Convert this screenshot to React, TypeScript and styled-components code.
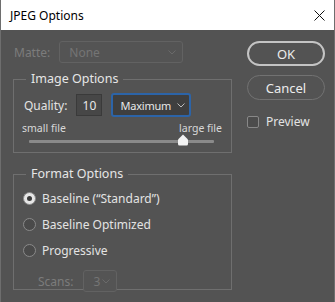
import React from "react";
import styled, { createGlobalStyle } from "styled-components";

const Global = createGlobalStyle`
  html, body { margin: 0; padding: 0; background: #535353; }
  body { font-family: "Noto Sans", "Open Sans", sans-serif; }
  * { box-sizing: border-box; }
`;

const Window = styled.div`
  width: 335px;
  height: 302px;
  display: flex;
  flex-direction: column;
  background: #535353;
  border-left: 1px solid #6e6e6e;
  border-right: 1px solid #6e6e6e;
  overflow: hidden;
`;

const TitleBar = styled.div`
  height: 30px;
  flex: none;
  background: #ffffff;
  display: flex;
  align-items: center;
  justify-content: space-between;
  padding: 0 9px 0 9px;
  color: #000;
  font-size: 12px;
`;

const CloseIcon = styled.svg`
  width: 11px;
  height: 11px;
`;

const Body = styled.div`
  flex: 1;
  display: flex;
  gap: 15px;
  padding: 11px 0 0 12px;
`;

const LeftCol = styled.div`
  width: 219px;
  display: flex;
  flex-direction: column;
`;

const RightCol = styled.div`
  width: 78px;
  display: flex;
  flex-direction: column;
  gap: 9px;
`;

const Row = styled.div<{ $gap?: number; $pl?: number; $mt?: number }>`
  display: flex;
  align-items: center;
  gap: ${(p) => p.$gap ?? 8}px;
  padding-left: ${(p) => p.$pl ?? 0}px;
  margin-top: ${(p) => p.$mt ?? 0}px;
`;

const Label = styled.span<{ $disabled?: boolean }>`
  font-size: 12px;
  color: ${(p) => (p.$disabled ? "#7c7c7c" : "#e3e3e3")};
  white-space: nowrap;
`;

const SelectBox = styled.div<{ $w: number; $h: number; $active?: boolean; $disabled?: boolean }>`
  width: ${(p) => p.$w}px;
  height: ${(p) => p.$h}px;
  flex: none;
  display: flex;
  align-items: center;
  justify-content: space-between;
  padding: 0 ${(p) => (p.$active ? 4 : 6)}px 0 ${(p) => (p.$active ? 7 : 9)}px;
  border-radius: 3px;
  font-size: ${(p) => (p.$active ? 11 : 12)}px;
  letter-spacing: ${(p) => (p.$active ? -0.2 : 0)}px;
  color: ${(p) => (p.$disabled ? "#757575" : "#e8e8e8")};
  background: ${(p) => (p.$active ? "#3f3f3f" : "#545454")};
  border: ${(p) => (p.$active ? "2px solid #2c64a8" : "1px solid #626262")};
`;

const Chevron = ({ color }: { color: string }) => (
  <svg width="8" height="5" viewBox="0 0 8 5" style={{ flex: "none" }}>
    <path d="M0.5 0.5 L4 4 L7.5 0.5" fill="none" stroke={color} strokeWidth="1" />
  </svg>
);

const Group = styled.fieldset<{ $h: number; $mt: number }>`
  margin: ${(p) => p.$mt}px 0 0 0;
  height: ${(p) => p.$h}px;
  border: 1px solid #6f6f6f;
  padding: 0;
  min-width: 0;
`;

const Legend = styled.legend`
  margin-left: 12px;
  padding: 0 5px;
  font-size: 12.5px;
  color: #e6e6e6;
  line-height: 14px;
`;

const NumInput = styled.div`
  width: 26px;
  height: 22px;
  flex: none;
  display: flex;
  align-items: center;
  justify-content: center;
  background: #474747;
  border: 1px solid #3a3a3a;
  font-size: 12px;
  color: #e8e8e8;
`;

const SliderArea = styled.div`
  display: flex;
  flex-direction: column;
  padding: 5px 0 0 8px;
  width: 208px;
`;

const SliderLabels = styled.div`
  display: flex;
  justify-content: space-between;
  font-size: 10.5px;
  color: #d8d8d8;
  line-height: 13px;
`;

const Track = styled.div`
  position: relative;
  margin: 5px 0 0 7px;
  width: 185px;
  height: 3px;
  background: #8a8a8a;
  border-radius: 1px;
`;

const Thumb = styled.svg`
  position: absolute;
  left: 148px;
  top: -6px;
`;

const RadioList = styled.div`
  display: flex;
  flex-direction: column;
  gap: 9px;
  padding: 9px 0 0 9px;
`;

const RadioRow = styled.div`
  display: flex;
  align-items: center;
  gap: 6px;
  height: 17px;
`;

const RadioCircle = styled.div<{ $checked?: boolean }>`
  width: 13px;
  height: 13px;
  border-radius: 50%;
  border: 1px solid #8a8a8a;
  background: ${(p) => (p.$checked ? "#e6e6e6" : "#4a4a4a")};
  display: flex;
  align-items: center;
  justify-content: center;
  &::after {
    content: "";
    display: ${(p) => (p.$checked ? "block" : "none")};
    width: 5px;
    height: 5px;
    border-radius: 50%;
    background: #3a3a3a;
  }
`;

const Button = styled.div<{ $primary?: boolean }>`
  height: 25px;
  border-radius: 13px;
  border: ${(p) => (p.$primary ? "2px solid #c4c4c4" : "1px solid #727272")};
  display: flex;
  align-items: center;
  justify-content: center;
  font-size: 13px;
  color: #ececec;
`;

const CheckRow = styled.div`
  display: flex;
  align-items: center;
  gap: 7px;
  margin-top: 4px;
`;

const CheckBox = styled.div`
  width: 12px;
  height: 12px;
  border: 1px solid #888;
  border-radius: 2px;
  background: #4c4c4c;
`;

export default function App() {
  return (
    <>
      <Global />
      <Window>
        <TitleBar>
          <span>JPEG Options</span>
          <CloseIcon viewBox="0 0 11 11">
            <path d="M0.5 0.5 L10.5 10.5 M10.5 0.5 L0.5 10.5" stroke="#111" strokeWidth="1" />
          </CloseIcon>
        </TitleBar>
        <Body>
          <LeftCol>
            <Row $gap={9} $pl={1}>
              <Label $disabled>Matte:</Label>
              <SelectBox $w={124} $h={22} $disabled>
                <span>None</span>
                <Chevron color="#6a6a6a" />
              </SelectBox>
            </Row>
            <Group $h={81} $mt={9}>
              <Legend>Image Options</Legend>
              <Row $gap={9} $pl={10} $mt={7}>
                <Label>Quality:</Label>
                <NumInput>10</NumInput>
                <SelectBox $w={80} $h={24} $active>
                  <span>Maximum</span>
                  <Chevron color="#bbbbbb" />
                </SelectBox>
              </Row>
              <SliderArea>
                <SliderLabels>
                  <span>small file</span>
                  <span>large file</span>
                </SliderLabels>
                <Track>
                  <Thumb width="12" height="12" viewBox="0 0 12 12">
                    <path d="M6 0.5 L11 5.5 L11 10 Q11 11.5 9.5 11.5 L2.5 11.5 Q1 11.5 1 10 L1 5.5 Z" fill="#f2f2f2" />
                  </Thumb>
                </Track>
              </SliderArea>
            </Group>
            <Group $h={123} $mt={14}>
              <Legend>Format Options</Legend>
              <RadioList>
                <RadioRow>
                  <RadioCircle $checked />
                  <Label>Baseline (“Standard”)</Label>
                </RadioRow>
                <RadioRow>
                  <RadioCircle />
                  <Label>Baseline Optimized</Label>
                </RadioRow>
                <RadioRow>
                  <RadioCircle />
                  <Label>Progressive</Label>
                </RadioRow>
                <Row $gap={10} $pl={15} $mt={2}>
                  <Label $disabled>Scans:</Label>
                  <SelectBox $w={34} $h={22} $disabled>
                    <span>3</span>
                    <Chevron color="#6a6a6a" />
                  </SelectBox>
                </Row>
              </RadioList>
            </Group>
          </LeftCol>
          <RightCol>
            <Button $primary>OK</Button>
            <Button>Cancel</Button>
            <CheckRow>
              <CheckBox />
              <Label>Preview</Label>
            </CheckRow>
          </RightCol>
        </Body>
      </Window>
    </>
  );
}
